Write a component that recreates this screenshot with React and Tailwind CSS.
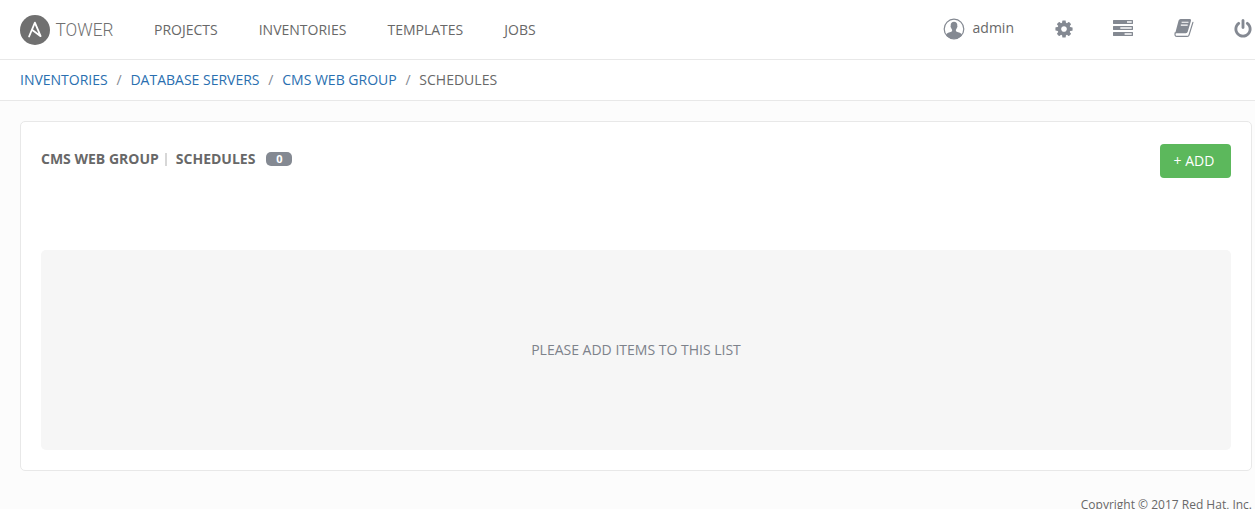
const NAV = [
  { label: "PROJECTS", gap: "ml-[39px]" },
  { label: "INVENTORIES", gap: "ml-[41px]" },
  { label: "TEMPLATES", gap: "ml-[41px]" },
  { label: "JOBS", gap: "ml-[41px]" },
];

const COG =
  "M1152 896q0-106-75-181t-181-75-181 75-75 181 75 181 181 75 181-75 75-181zm512-109v222q0 12-8 23t-20 13l-185 28q-19 54-39 91 35 50 107 138 10 12 10 25t-9 23q-27 37-99 108t-94 71q-12 0-26-9l-138-108q-44 23-91 38-16 136-29 186-7 28-36 28h-222q-14 0-24.5-8.5t-11.5-21.5l-28-184q-49-16-90-37l-141 107q-10 9-25 9-14 0-25-11-126-114-165-168-7-10-7-23 0-12 8-23 15-21 51-66.5t54-70.5q-27-50-41-99l-183-27q-13-2-21-12.5t-8-23.5v-222q0-12 8-23t19-13l186-28q14-46 39-92-40-57-107-138-10-12-10-24 0-10 9-23 26-36 98.5-107.5t94.5-71.5q13 0 26 10l138 107q44-23 91-38 16-136 29-186 7-28 36-28h222q14 0 24.5 8.5t11.5 21.5l28 184q49 16 90 37l142-107q9-9 24-9 13 0 25 10 129 119 165 170 7 8 7 22 0 12-8 23-15 21-51 66.5t-54 70.5q26 50 41 98l183 28q13 2 21 12.5t8 23.5z";
const POWER =
  "M1664 896q0 156-61 298t-164 245-245 164-298 61-298-61-245-164-164-245-61-298q0-182 80.5-343t226.5-270q43-32 95.5-25t83.5 50q32 42 24.5 94.5t-49.5 84.5q-98 74-151.5 181t-53.5 228q0 104 40.5 198.5t109.5 163.5 163.5 109.5 198.5 40.5 198.5-40.5 163.5-109.5 109.5-163.5 40.5-198.5q0-121-53.5-228t-151.5-181q-42-32-49.5-84.5t24.5-94.5q31-43 84-50t95 25q146 109 226.5 270t80.5 343zm-640-768v640q0 52-38 90t-90 38-90-38-38-90v-640q0-52 38-90t90-38 90 38 38 90z";

function Glyph({ d, className }) {
  return (
    <svg viewBox="0 0 1792 1792" fill="currentColor" className={`shrink-0 ${className}`}>
      <path d={d} />
    </svg>
  );
}

function Logo() {
  return (
    <div className="flex items-center">
      <svg viewBox="0 0 30 30" className="h-[30px] w-[30px]">
        <circle cx="15" cy="15" r="15" fill="#707070" />
        <path
          d="M9.1 21.5 14.9 7.6 20.6 21.2 12 14.7"
          fill="none"
          stroke="#fff"
          strokeWidth="1.8"
          strokeLinejoin="round"
          strokeLinecap="round"
        />
      </svg>
      <svg viewBox="0 0 60 24" className="ml-[5px] h-6 w-[60px] overflow-visible">
        <text
          x="0.5"
          y="18.2"
          textLength="58"
          lengthAdjust="spacingAndGlyphs"
          fontSize="18"
          fontWeight="300"
          fontFamily="Roboto, sans-serif"
          fill="#707070"
        >
          TOWER
        </text>
      </svg>
    </div>
  );
}

function UserIcon() {
  return (
    <svg viewBox="0 0 22 22" className="h-[22px] w-[22px] shrink-0">
      <circle cx="11" cy="11" r="9.8" fill="#fff" stroke="#848992" strokeWidth="1.2" />
      <path
        d="M11 3.7c2.1 0 3.3 1.3 3.3 3.2 0 .5 0 .8-.1 1.2.5.2.3 1.4-.3 1.7-.2.8-.5 1.4-1 1.9v1.3c.4 1 4 1.2 5.2 2.6.5.6.7 1.1.7 1.8A9.8 9.8 0 0 1 11 20.8a9.8 9.8 0 0 1-7.8-3.4c0-.7.2-1.2.7-1.8 1.2-1.4 4.8-1.6 5.2-2.6v-1.3c-.5-.5-.8-1.1-1-1.9-.6-.3-.8-1.5-.3-1.7-.1-.4-.1-.7-.1-1.2 0-1.9 1.2-3.2 3.3-3.2z"
        fill="#848992"
      />
    </svg>
  );
}

function JobsIcon() {
  return (
    <svg viewBox="0 0 20 16" fill="currentColor" className="mb-px ml-[39px] h-4 w-5 shrink-0">
      <path
        fillRule="evenodd"
        d="M.4 0h19.2q.4 0 .4.4v3.2q0 .4-.4.4H.4Q0 4 0 3.6V.4Q0 0 .4 0zM14 1.3v1.4h4.7V1.3zM.4 6h19.2q.4 0 .4.4v3.2q0 .4-.4.4H.4Q0 10 0 9.6V6.4Q0 6 .4 6zM7.3 7.3v1.4h11.4V7.3zM.4 12h19.2q.4 0 .4.4v3.2q0 .4-.4.4H.4q-.4 0-.4-.4v-3.2q0-.4.4-.4zM11.6 13.3v1.4h7.1v-1.4z"
      />
    </svg>
  );
}

function BookIcon() {
  return (
    <svg viewBox="0 0 20 20" className="mb-px ml-[41px] h-5 w-5 shrink-0">
      <path
        d="M6.6 1h9.2q1.7 0 1.2 1.7l-3.3 11.1q-.4 1.4-1.8 1.4H2.4q-1 0-1.4.7L4.6 2.6Q5.1 1 6.6 1z"
        fill="currentColor"
      />
      <path
        d="M1.2 14.6Q.3 18.4 3 18.4h10.3q1.3 0 1.7-1.3L18.9 4.4"
        fill="none"
        stroke="currentColor"
        strokeWidth="1.2"
        strokeLinecap="round"
      />
      <path d="M7.6 4.3h6.9M6.8 7.1h6.9" stroke="#fff" strokeWidth="1.1" />
    </svg>
  );
}

function Slash() {
  return <span className="w-[22.7px] text-center text-[#848992]">/</span>;
}

export default function App() {
  return (
    <div className="flex h-[509px] w-full flex-col overflow-hidden bg-[#fcfcfc] font-['Open_Sans',sans-serif] text-[14px] leading-5 text-[#686868]">
      <header className="flex h-[60px] shrink-0 border-b border-[#e8e8e8] bg-white pl-5">
        <Logo />
        <nav className="flex items-center">
          {NAV.map((n) => (
            <a key={n.label} className={`whitespace-nowrap ${n.gap}`}>
              {n.label}
            </a>
          ))}
        </nav>
        <div className="ml-auto flex h-[57px] items-center text-[#848992]">
          <UserIcon />
          <span className="mb-[2px] ml-[8px] text-[#686868]">admin</span>
          <Glyph d={COG} className="ml-[40px] h-5 w-5" />
          <JobsIcon />
          <BookIcon />
          <Glyph d={POWER} className="mr-[2px] ml-[39px] h-5 w-5" />
        </div>
      </header>

      <div className="flex h-[41px] shrink-0 items-center border-b border-[#e8e8e8] bg-white pl-5 whitespace-nowrap">
        <a className="text-[#2a6fb0]">INVENTORIES</a>
        <Slash />
        <a className="text-[#2a6fb0]">DATABASE SERVERS</a>
        <Slash />
        <a className="text-[#2a6fb0]">CMS WEB GROUP</a>
        <Slash />
        <span>SCHEDULES</span>
      </div>

      <main className="mt-5 mr-[3px] ml-5 h-[350px] shrink-0 rounded-[5px] border border-[#e8e8e8] bg-white px-5 pt-[22px]">
        <div className="flex h-[106px] items-start justify-between">
          <div className="flex items-center pt-[5px] font-bold whitespace-nowrap">
            <span>CMS WEB GROUP</span>
            <span className="mr-[9px] ml-[6px] h-[13px] w-[2px] bg-[#d7d7d7]" />
            <span>SCHEDULES</span>
            <span className="ml-[11px] flex h-[14px] w-[26px] items-center justify-center rounded-[5px] bg-[#848992] pb-px text-[11px] leading-none text-white">
              0
            </span>
          </div>
          <button className="flex h-[34px] w-[71px] items-center rounded-[4px] bg-[#5cb85c] pl-[13.5px] font-medium text-white">
            + ADD
          </button>
        </div>
        <div className="flex h-[200px] items-center justify-center rounded-[5px] bg-[#f6f6f6] text-[#7d828b]">
          PLEASE ADD ITEMS TO THIS LIST
        </div>
      </main>

      <footer className="mt-[26px] mr-[3px] text-right text-[12px] leading-4 whitespace-nowrap">
        Copyright © 2017 Red Hat, Inc.
      </footer>
    </div>
  );
}
